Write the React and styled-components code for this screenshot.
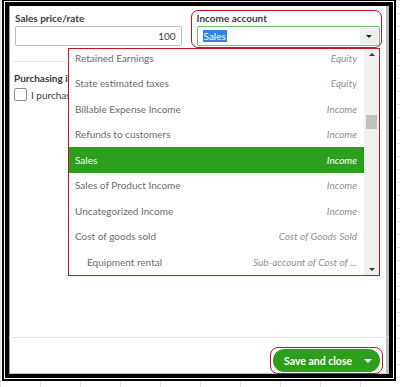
import React from 'react';
import styled, { createGlobalStyle } from 'styled-components';

const GlobalStyle = createGlobalStyle`
  html, body {
    margin: 0;
    padding: 0;
  }
  body {
    width: 400px;
    height: 387px;
    overflow: hidden;
    background-color: #fff;
    background-image:
      linear-gradient(#e2e2e2 1px, transparent 1px),
      linear-gradient(90deg, #e2e2e2 1px, transparent 1px);
    background-size: 40px 13px;
    font-family: Lato, "Open Sans", sans-serif;
  }
`;

const Frame = styled.div`
  box-sizing: border-box;
  margin-left: 2px;
  width: 394px;
  height: 381px;
  border: 2px solid #000;
  border-top-width: 1px;
  padding: 1px;
  background: #fff;
`;

const Panel = styled.div`
  box-sizing: border-box;
  height: 100%;
  border: 4px solid #000;
  background: #fff;
  box-shadow: inset 1px 0 #9a9a9a, inset -3px 0 #bdbdbd, inset 0 -1px #bdbdbd;
  position: relative;
  display: flex;
  flex-direction: column;
`;

const FieldRow = styled.div`
  display: flex;
  gap: 8px;
  padding: 4px 7px 0 5px;
`;

const Field = styled.div`
  box-sizing: border-box;
  display: flex;
  flex-direction: column;
  width: ${({ $w }) => $w}px;
  padding: ${({ $outlined }) => ($outlined ? '1px 1px 1px 5px' : '1px 0 0 0')};
  border: ${({ $outlined }) => ($outlined ? '1.5px solid #c4161c' : '1.5px solid transparent')};
  border-radius: 7px;
`;

const Label = styled.div`
  font-size: 10px;
  line-height: 13px;
  font-weight: 700;
  color: #393a3d;
  white-space: nowrap;
  margin-bottom: 1px;
`;

const NumberInput = styled.div`
  box-sizing: border-box;
  height: 20px;
  border: 1px solid #babec5;
  border-radius: 2px;
  display: flex;
  align-items: center;
  justify-content: flex-end;
  padding-right: 5px;
  font-size: 10px;
  color: #393a3d;
`;

const Select = styled.div`
  box-sizing: border-box;
  height: 20px;
  border: 1px solid #6fc068;
  border-radius: 2px;
  display: flex;
  align-items: stretch;
  justify-content: space-between;
  padding-left: 5px;
`;

const Selected = styled.span`
  align-self: center;
  background: #3283e0;
  color: #fff;
  font-size: 10px;
  line-height: 12px;
  padding: 0 1px;
`;

const ArrowBox = styled.div`
  width: 18px;
  background: #eceef1;
  display: flex;
  align-items: center;
  justify-content: center;
  margin: 1px;
`;

const Caret = styled.span`
  width: 0;
  height: 0;
  border-left: ${({ $s }) => $s}px solid transparent;
  border-right: ${({ $s }) => $s}px solid transparent;
  border-${({ $up }) => ($up ? 'bottom' : 'top')}: ${({ $s }) => $s}px solid ${({ $c }) => $c};
`;

const Rule = styled.div`
  height: 1px;
  background: #e3e5e8;
  margin: ${({ $m }) => $m};
`;

const Section = styled.div`
  width: 54px;
  overflow: hidden;
  padding: 10px 0 0 5px;
  display: flex;
  flex-direction: column;
  gap: 2px;
`;

const CheckRow = styled.label`
  display: flex;
  align-items: center;
  gap: 4px;
  font-size: 10px;
  color: #393a3d;
  white-space: nowrap;
`;

const CheckBox = styled.span`
  box-sizing: border-box;
  flex: none;
  width: 13px;
  height: 13px;
  border: 1px solid #8d9096;
  border-radius: 2px;
`;

const Spacer = styled.div`
  flex: 1;
`;

const Footer = styled.div`
  display: flex;
  justify-content: flex-end;
  padding: 9px 6px 0 0;
  height: 36px;
  box-sizing: border-box;
`;

const Outline = styled.div`
  border: 1.5px solid #c4161c;
  border-radius: 8px;
  padding: 1px 2px;
  align-self: flex-start;
`;

const SaveButton = styled.button`
  display: flex;
  align-items: center;
  justify-content: space-between;
  height: 23px;
  width: 107px;
  padding: 0 8px 0 11px;
  border: none;
  border-radius: 12px;
  background: #2ca01c;
  color: #fff;
  font-family: Lato, "Open Sans", sans-serif;
  font-size: 10.5px;
  font-weight: 700;
  white-space: nowrap;
`;

const Dropdown = styled.div`
  position: absolute;
  left: 59px;
  top: 42px;
  width: 312px;
  height: 228px;
  box-sizing: border-box;
  border: 1.5px solid #c4161c;
  background: #fff;
  display: flex;
  z-index: 5;
`;

const List = styled.div`
  flex: 1;
  overflow: hidden;
`;

const ListInner = styled.div`
  margin-top: -4px;
`;

const Option = styled.div`
  height: 25.5px;
  display: flex;
  align-items: center;
  justify-content: space-between;
  padding: 0 7px 0 ${({ $sub }) => ($sub ? 18 : 6)}px;
  background: ${({ $active }) => ($active ? '#2ca01c' : 'transparent')};
  color: ${({ $active }) => ($active ? '#fff' : '#6b6c72')};
  font-size: 10px;
  white-space: nowrap;
`;

const Type = styled.span`
  font-style: italic;
  color: ${({ $active }) => ($active ? '#fff' : '#8d9096')};
`;

const ScrollBar = styled.div`
  width: 15px;
  background: #f1f1f1;
  display: flex;
  flex-direction: column;
  align-items: center;
  justify-content: space-between;
  padding: 4px 0;
  position: relative;
`;

const Thumb = styled.div`
  position: absolute;
  left: 2px;
  right: 2px;
  top: 66px;
  height: 14px;
  background: #c1c1c1;
`;

const accounts = [
  { name: 'Retained Earnings', type: 'Equity' },
  { name: 'State estimated taxes', type: 'Equity' },
  { name: 'Billable Expense Income', type: 'Income' },
  { name: 'Refunds to customers', type: 'Income' },
  { name: 'Sales', type: 'Income', active: true },
  { name: 'Sales of Product Income', type: 'Income' },
  { name: 'Uncategorized Income', type: 'Income' },
  { name: 'Cost of goods sold', type: 'Cost of Goods Sold' },
  { name: 'Equipment rental', type: 'Sub-account of Cost of ...', sub: true },
];

export default function App() {
  return (
    <>
      <GlobalStyle />
      <Frame>
        <Panel>
          <FieldRow>
            <Field $w={169}>
              <Label>Sales price/rate</Label>
              <NumberInput>100</NumberInput>
            </Field>
            <Field $w={192} $outlined>
              <Label>Income account</Label>
              <Select>
                <Selected>Sales</Selected>
                <ArrowBox>
                  <Caret $s={3} $c="#222" />
                </ArrowBox>
              </Select>
            </Field>
          </FieldRow>

          <Rule $m="13px 200px 0 5px" />

          <Section>
            <Label>Purchasing information</Label>
            <CheckRow>
              <CheckBox />
              I purchase this product/service from a vendor.
            </CheckRow>
          </Section>

          <Spacer />
          <Rule $m="0" />
          <Footer>
            <Outline>
              <SaveButton>
                Save and close
                <Caret $s={4} $c="#fff" />
              </SaveButton>
            </Outline>
          </Footer>

          <Dropdown>
            <List>
              <ListInner>
                {accounts.map((a) => (
                  <Option key={a.name} $active={a.active} $sub={a.sub}>
                    <span>{a.name}</span>
                    <Type $active={a.active}>{a.type}</Type>
                  </Option>
                ))}
              </ListInner>
            </List>
            <ScrollBar>
              <Caret $up $s={3} $c="#333" />
              <Thumb />
              <Caret $s={3} $c="#333" />
            </ScrollBar>
          </Dropdown>
        </Panel>
      </Frame>
    </>
  );
}
